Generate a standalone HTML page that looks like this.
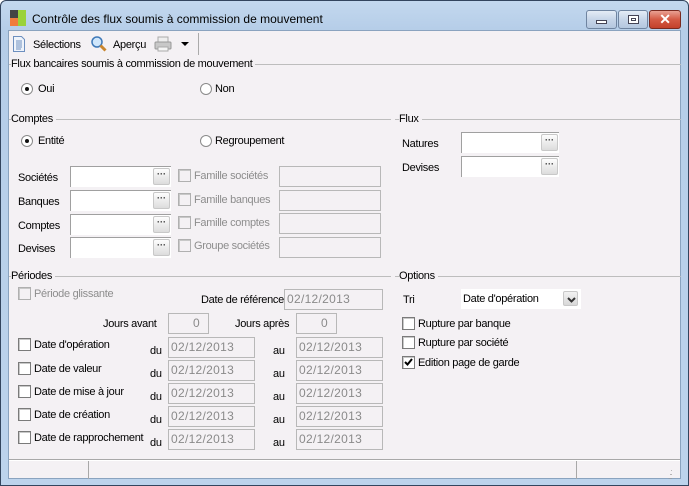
<!DOCTYPE html>
<html><head><meta charset="utf-8">
<style>
*{box-sizing:border-box;margin:0;padding:0}
body{width:689px;height:486px;overflow:hidden;background:#fff;font-family:"Liberation Sans",sans-serif;font-size:11px;letter-spacing:-0.3px;color:#000;position:relative}
#frame{position:absolute;left:0;top:0;width:689px;height:486px;background:linear-gradient(#c3d8ee,#b5cde8 30px,#bcd3ec);border:1px solid #33455e;border-radius:6px 6px 0 0}
#client{position:absolute;left:8px;top:30px;width:673px;height:449px;background:#f4f1f4;border:1px solid #8aa3bf}
.a{position:absolute;white-space:nowrap}
.t{position:absolute;white-space:nowrap;line-height:14px}
.lb{background:#f4f1f4;padding-right:3px;z-index:2}
.g{color:#8d8d8d}
.in{position:absolute;background:#fff;border-top:1px solid #a0a0a0;border-left:1px solid #a0a0a0;height:21px}
.dis{position:absolute;background:#f4f1f4;border:1px solid #b8b8b8;height:21px;color:#8a8a8a;line-height:19px;padding-left:2px;font-size:12px;letter-spacing:0.3px}
.btn{position:absolute;width:17px;height:17px;background:linear-gradient(#fdfdfd,#dcdcdc);border:1px solid #c8c8c8;border-radius:2px;font-size:9px;line-height:11px;text-align:center;color:#333;font-weight:bold;letter-spacing:0}
.cb{position:absolute;width:13px;height:13px;border:1px solid #7a7a7a;background:#fff;box-shadow:inset 1px 1px 0 #c8c8c8}
.cb.d{border-color:#b0b0b0;background:#f4f1f4}
.rd{position:absolute;width:12px;height:12px;border-radius:50%;border:1px solid #8a8a8a;background:#fff}
.rd.on::after{content:"";position:absolute;left:3px;top:3px;width:4px;height:4px;border-radius:50%;background:#111}
.ln{position:absolute;height:1px;background:#bdbdbd}
.wb{position:absolute;top:9px;height:19px;border:1px solid #6f84a0;border-radius:3px;background:linear-gradient(#e4ecf6,#c6d5e8 50%,#b4c7df)}
</style></head><body>
<div id="frame">
 <div class="a" style="left:9px;top:9px;width:16px;height:16px">
  <div style="position:absolute;left:0;top:0;width:8px;height:8px;background:#444"></div>
  <div style="position:absolute;left:0;top:8px;width:8px;height:8px;background:#f07c3c"></div>
  <div style="position:absolute;left:8px;top:0;width:8px;height:16px;background:#9ad23a"></div>
 </div>
 <div class="t" style="left:31px;top:11px;font-size:12px;letter-spacing:0">Contrôle des flux soumis à commission de mouvement</div>
 <div class="wb" style="left:585px;width:31px"><div style="position:absolute;left:9px;top:9px;width:11px;height:4px;background:#fff;border:1px solid #445"></div></div>
 <div class="wb" style="left:617px;width:30px"><div style="position:absolute;left:9px;top:4px;width:11px;height:9px;background:#fff;border:1px solid #445"><div style="margin:2px;height:3px;border:1px solid #445"></div></div></div>
 <div class="wb" style="left:648px;width:32px;border-color:#7a2a20;background:linear-gradient(#e9a193,#d45a44 50%,#c3402a)"><div style="color:#fff;font-weight:bold;font-size:14px;text-align:center;line-height:16px">✕</div></div>
</div>
<div id="client">
 <svg class="a" style="left:3px;top:5px" width="14" height="16"><path d="M1.5 .5h8l3 3v12h-11z" fill="#eef3fb" stroke="#6d8fbf"/><path d="M4 5h6M4 7h6M4 9h6M4 11h6M4 13h5" stroke="#6d8fbf"/></svg>
 <div class="t" style="left:24px;top:7px">Sélections</div>
 <svg class="a" style="left:81px;top:4px" width="18" height="18"><circle cx="7" cy="7" r="5" fill="#cfe6fb" stroke="#3f79b8" stroke-width="1.5"/><path d="M10.5 10.5l5 5" stroke="#c9862e" stroke-width="3"/></svg>
 <div class="t" style="left:104px;top:7px">Aperçu</div>
 <svg class="a" style="left:145px;top:5px" width="18" height="16"><rect x="4" y="1" width="10" height="5" fill="#eee" stroke="#aaa"/><rect x="1" y="6" width="16" height="7" rx="1" fill="#c8c8c8" stroke="#999"/><rect x="4" y="11" width="10" height="4" fill="#f5f5f5" stroke="#aaa"/></svg>
 <svg class="a" style="left:172px;top:11px" width="9" height="5"><path d="M0 0h8l-4 4z" fill="#000"/></svg>
 <div class="a" style="left:189px;top:2px;width:1px;height:22px;background:#aaa"></div>

 <div class="ln" style="left:0;top:33px;width:672px"></div>
 <div class="t lb" style="left:2px;top:26px">Flux bancaires soumis à commission de mouvement</div>
 <div class="rd on" style="left:12px;top:52px"></div><div class="t" style="left:29px;top:51px">Oui</div>
 <div class="rd" style="left:191px;top:52px"></div><div class="t" style="left:206px;top:51px">Non</div>

 <div class="ln" style="left:0;top:88px;width:382px"></div>
 <div class="t lb" style="left:2px;top:81px">Comptes</div>
 <div class="ln" style="left:386px;top:88px;width:286px"></div>
 <div class="t lb" style="left:390px;top:81px">Flux</div>
 <div class="rd on" style="left:12px;top:104px"></div><div class="t" style="left:29px;top:103px">Entité</div>
 <div class="rd" style="left:191px;top:104px"></div><div class="t" style="left:206px;top:103px">Regroupement</div>

 <div class="t" style="left:9px;top:140px">Sociétés</div>
 <div class="in" style="left:61px;top:135px;width:101px"></div><div class="btn" style="left:144px;top:137px">···</div>
 <div class="cb d" style="left:169px;top:138px"></div><div class="t g" style="left:185px;top:138px">Famille sociétés</div>
 <div class="dis" style="left:270px;top:135px;width:102px"></div>

 <div class="t" style="left:9px;top:164px">Banques</div>
 <div class="in" style="left:61px;top:159px;width:101px"></div><div class="btn" style="left:144px;top:161px">···</div>
 <div class="cb d" style="left:169px;top:162px"></div><div class="t g" style="left:185px;top:162px">Famille banques</div>
 <div class="dis" style="left:270px;top:159px;width:102px"></div>

 <div class="t" style="left:9px;top:188px">Comptes</div>
 <div class="in" style="left:61px;top:183px;width:101px"></div><div class="btn" style="left:144px;top:185px">···</div>
 <div class="cb d" style="left:169px;top:185px"></div><div class="t g" style="left:185px;top:185px">Famille comptes</div>
 <div class="dis" style="left:270px;top:182px;width:102px"></div>

 <div class="t" style="left:9px;top:211px">Devises</div>
 <div class="in" style="left:61px;top:206px;width:101px"></div><div class="btn" style="left:144px;top:208px">···</div>
 <div class="cb d" style="left:169px;top:208px"></div><div class="t g" style="left:185px;top:208px">Groupe sociétés</div>
 <div class="dis" style="left:270px;top:206px;width:102px"></div>

 <div class="t" style="left:393px;top:106px">Natures</div>
 <div class="in" style="left:452px;top:101px;width:98px"></div><div class="btn" style="left:532px;top:103px">···</div>
 <div class="t" style="left:393px;top:130px">Devises</div>
 <div class="in" style="left:452px;top:125px;width:98px"></div><div class="btn" style="left:532px;top:127px">···</div>

 <div class="ln" style="left:0;top:245px;width:382px"></div>
 <div class="t lb" style="left:2px;top:238px">Périodes</div>
 <div class="ln" style="left:386px;top:245px;width:286px"></div>
 <div class="t lb" style="left:390px;top:238px">Options</div>

 <div class="cb d" style="left:9px;top:256px"></div><div class="t g" style="left:25px;top:256px">Période glissante</div>
 <div class="t" style="left:192px;top:262px">Date de référence</div>
 <div class="dis" style="left:275px;top:258px;width:99px">02/12/2013</div>

 <div class="t" style="left:94px;top:286px">Jours avant</div>
 <div class="dis" style="left:159px;top:282px;width:41px;text-align:right;padding-right:8px">0</div>
 <div class="t" style="left:226px;top:286px">Jours après</div>
 <div class="dis" style="left:287px;top:282px;width:41px;text-align:right;padding-right:8px">0</div>

 <div class="cb" style="left:9px;top:307px"></div><div class="t" style="left:25px;top:307px">Date d'opération</div>
 <div class="t" style="left:141px;top:313px">du</div><div class="dis" style="left:159px;top:306px;width:87px">02/12/2013</div>
 <div class="t" style="left:264px;top:313px">au</div><div class="dis" style="left:287px;top:306px;width:87px">02/12/2013</div>

 <div class="cb" style="left:9px;top:331px"></div><div class="t" style="left:25px;top:331px">Date de valeur</div>
 <div class="t" style="left:141px;top:336px">du</div><div class="dis" style="left:159px;top:329px;width:87px">02/12/2013</div>
 <div class="t" style="left:264px;top:336px">au</div><div class="dis" style="left:287px;top:329px;width:87px">02/12/2013</div>

 <div class="cb" style="left:9px;top:354px"></div><div class="t" style="left:25px;top:354px">Date de mise à jour</div>
 <div class="t" style="left:141px;top:359px">du</div><div class="dis" style="left:159px;top:352px;width:87px">02/12/2013</div>
 <div class="t" style="left:264px;top:359px">au</div><div class="dis" style="left:287px;top:352px;width:87px">02/12/2013</div>

 <div class="cb" style="left:9px;top:377px"></div><div class="t" style="left:25px;top:377px">Date de création</div>
 <div class="t" style="left:141px;top:382px">du</div><div class="dis" style="left:159px;top:375px;width:87px">02/12/2013</div>
 <div class="t" style="left:264px;top:382px">au</div><div class="dis" style="left:287px;top:375px;width:87px">02/12/2013</div>

 <div class="cb" style="left:9px;top:400px"></div><div class="t" style="left:25px;top:400px">Date de rapprochement</div>
 <div class="t" style="left:141px;top:405px">du</div><div class="dis" style="left:159px;top:398px;width:87px">02/12/2013</div>
 <div class="t" style="left:264px;top:405px">au</div><div class="dis" style="left:287px;top:398px;width:87px">02/12/2013</div>

 <div class="t" style="left:394px;top:262px">Tri</div>
 <div class="a" style="left:452px;top:258px;width:120px;height:20px;background:#fff;line-height:20px;padding-left:2px">Date d'opération
  <div style="position:absolute;right:3px;top:2px;width:15px;height:15px;background:linear-gradient(#f2f2f2,#d8d8d8);border:1px solid #c8c8c8;border-radius:2px"><svg width="13" height="13" style="position:absolute;left:1px;top:1px"><path d="M3 5l3.5 3.5 3.5-3.5" stroke="#333" stroke-width="2" fill="none"/></svg></div>
 </div>
 <div class="cb" style="left:393px;top:286px"></div><div class="t" style="left:409px;top:286px">Rupture par banque</div>
 <div class="cb" style="left:393px;top:305px"></div><div class="t" style="left:409px;top:305px">Rupture par société</div>
 <div class="cb" style="left:393px;top:325px"><svg width="11" height="11" style="position:absolute;left:0;top:0"><path d="M2 5l2.5 2.5 4.5-5.5" stroke="#000" stroke-width="2" fill="none"/></svg></div><div class="t" style="left:409px;top:325px">Edition page de garde</div>

 <div class="a" style="left:0;top:428px;width:671px;height:1px;background:#a8a8a8"></div>
 <div class="a" style="left:0;top:429px;width:671px;height:19px;border-top:1px solid #fff"></div>
 <div class="a" style="left:79px;top:430px;width:1px;height:18px;background:#a8a8a8"></div>
 <div class="a" style="left:567px;top:430px;width:1px;height:18px;background:#a8a8a8"></div>
 <div class="a" style="left:659px;top:436px;font-size:8px;color:#999;line-height:4px;letter-spacing:-1px">&nbsp;&nbsp;.<br>&nbsp;..<br>...</div>
</div>
</body></html>
